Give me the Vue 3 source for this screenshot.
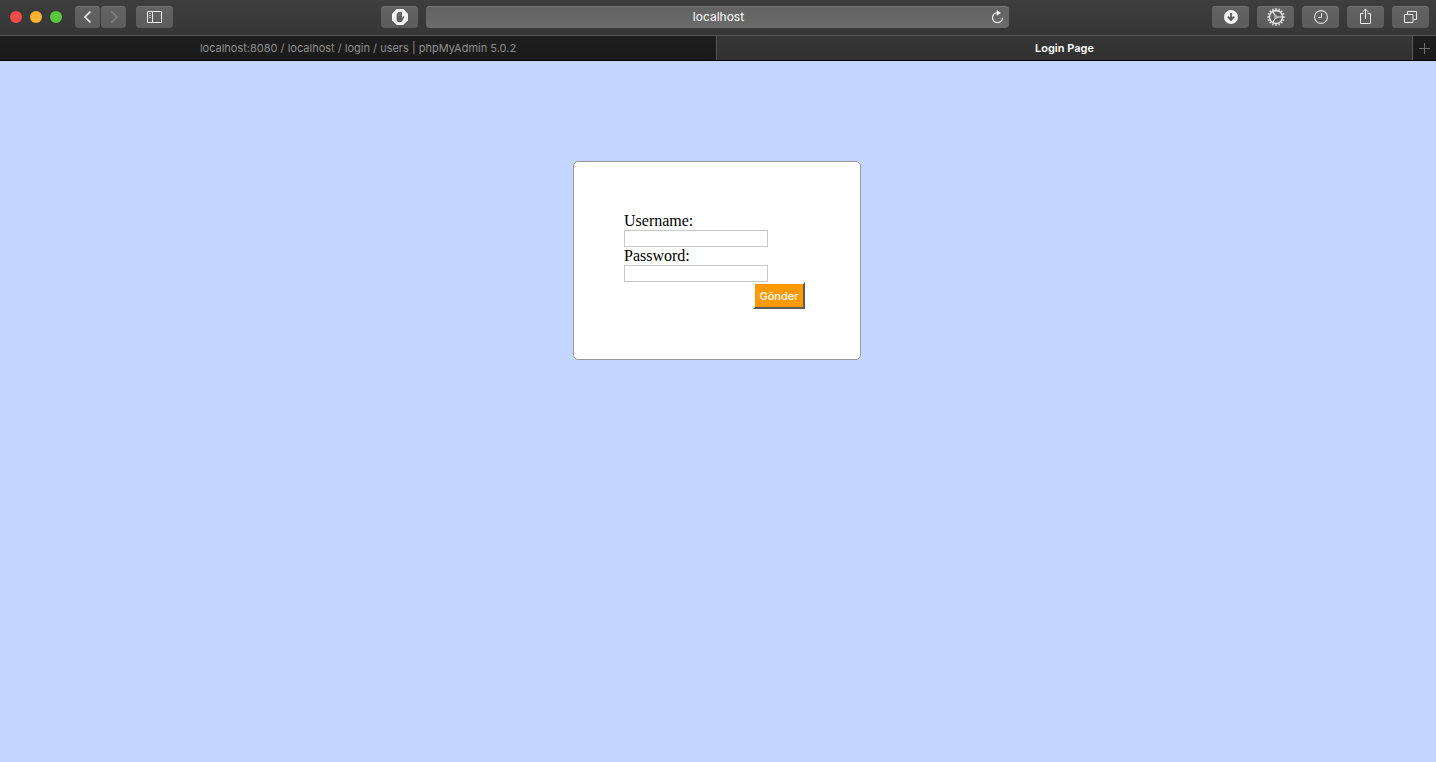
<script setup>
import { ref } from 'vue'

const address = ref('localhost')
const username = ref('')
const password = ref('')
const teeth = Array.from({ length: 16 }, (_, i) => i * 22.5)
</script>

<template>
  <div class="window">
    <header class="toolbar">
      <div class="side left">
        <div class="lights">
          <button class="light red" aria-label="Close"></button>
          <button class="light yellow" aria-label="Minimize"></button>
          <button class="light green" aria-label="Zoom"></button>
        </div>
        <div class="nav">
          <button class="tool narrow" aria-label="Back">
            <svg width="10" height="14" viewBox="0 0 10 14"><path d="M7.500 1.500 2 7l5.500 5.500" fill="none" stroke="#f0f0f0" stroke-width="1.700" /></svg>
          </button>
          <button class="tool narrow" aria-label="Forward">
            <svg width="10" height="14" viewBox="0 0 10 14"><path d="M2.500 1.500 8 7l-5.500 5.500" fill="none" stroke="#858585" stroke-width="1.500" /></svg>
          </button>
        </div>
        <button class="tool" aria-label="Sidebar">
          <svg width="15" height="12" viewBox="0 0 15 12" fill="none" stroke="#ececec">
            <path d="M.5.5h14v11H.5zM5.500.5v11" />
            <path d="M2 2.500h2M2 4.500h2M2 6.500h2" stroke="#bdbdbd" />
          </svg>
        </button>
        <button class="tool blocker" aria-label="Content blocker">
          <svg width="16" height="16" viewBox="0 0 16 16">
            <path d="M4.700 0h6.600L16 4.700v6.600L11.300 16H4.700L0 11.300V4.700z" fill="#f4f4f4" />
            <path d="M4.600 8.200V5q0-.8.600-.8t.6.800V3.800q0-.8.700-.8t.7.800V3.200q0-.8.700-.8t.7.800v.7q0-.8.700-.8t.7.800v5l1-1.500q.5-.7 1-.3.400.3.100.9l-1.600 3.500Q9.800 13.300 8 13.300q-3.400 0-3.400-3z" fill="#5e5e5e" />
            <path d="M5.800 4.300v3M7.200 3.500v3.500M8.600 3.500v3.500" stroke="#8a8a8a" stroke-width=".4" />
          </svg>
        </button>
      </div>

      <div class="address">
        <input v-model="address" type="text" aria-label="Address" />
        <button class="reload" aria-label="Reload">
          <svg width="13" height="14" viewBox="0 0 13 14">
            <path d="M6.500 2.700a5 5 0 1 0 5 5" fill="none" stroke="#ececec" stroke-width="1.200" />
            <path d="M5.700 0 10 3 5.700 5.700z" fill="#ececec" />
          </svg>
        </button>
      </div>

      <div class="side right">
        <button class="tool" aria-label="Downloads">
          <svg width="14" height="14" viewBox="0 0 14 14">
            <circle cx="7" cy="7" r="7" fill="#f2f2f2" />
            <path d="M7 3v6M3.900 6.700 7 10l3.100-3.300" fill="none" stroke="#555" stroke-width="1.800" />
          </svg>
        </button>
        <button class="tool" aria-label="Settings">
          <svg width="18" height="18" viewBox="0 0 18 18" fill="none" stroke="#f0f0f0">
            <circle cx="9" cy="9" r="6.500" stroke-width="1.300" />
            <path v-for="a in teeth" :key="a" d="M9 2.200V.1" stroke-width="1.300" :transform="`rotate(${a} 9 9)`" />
            <path d="M9 9h6.300M9 9 5.700 3.400M9 9l-3.300 5.600" stroke-width="1.100" />
            <circle cx="9" cy="9" r="1.200" fill="#5f5f5f" stroke-width=".8" />
          </svg>
        </button>
        <button class="tool" aria-label="History">
          <svg width="14" height="14" viewBox="0 0 14 14" fill="none" stroke="#dedede">
            <circle cx="7" cy="7" r="6.400" stroke-width="1.100" />
            <path d="M7.500 3v4.500H4" />
          </svg>
        </button>
        <button class="tool" aria-label="Share">
          <svg class="share" width="11" height="16" viewBox="0 0 11 16" fill="none" stroke="#ececec">
            <path d="M3.500 5.500h-3v10h10v-10h-3M5.500 11V1.200M2.700 3.900l2.800-2.800 2.800 2.800" />
          </svg>
        </button>
        <button class="tool" aria-label="Show all tabs">
          <svg width="13" height="12" viewBox="0 0 13 12" fill="none" stroke="#ececec">
            <path d="M.5 3.500h8.500v8H.5zM3.500 3V.5h9v8H9.500" />
          </svg>
        </button>
      </div>
    </header>

    <nav class="tabs">
      <button class="tab">localhost:8080 / localhost / login / users | phpMyAdmin 5.0.2</button>
      <button class="tab active">Login Page</button>
      <button class="tab add" aria-label="New tab">
        <svg width="11" height="11" viewBox="0 0 11 11"><path d="M5.500 0v11M0 5.500h11" stroke="#707070" /></svg>
      </button>
    </nav>

    <main>
      <form class="card" @submit.prevent>
        <label for="username">Username:</label>
        <input id="username" v-model="username" type="text" />
        <label for="password">Password:</label>
        <input id="password" v-model="password" type="password" />
        <button class="submit" type="submit">Gönder</button>
      </form>
    </main>
  </div>
</template>

<style>
body {
  background: #c2d6ff;
}
</style>

<style scoped>
.window {
  font-family: Inter, "Liberation Sans", sans-serif;
}
button,
input {
  box-sizing: border-box;
  margin: 0;
  padding: 0;
  border: 0;
  font-family: inherit;
}
svg {
  display: block;
}
.toolbar {
  display: grid;
  grid-template-columns: 426fr 583fr 427fr;
  padding: 6px 0 7px;
  background: linear-gradient(#3e3e3e, #363636);
  border-bottom: 1px solid #585858;
}
.side {
  display: flex;
  align-items: center;
}
.left {
  padding: 0 8px 0 10px;
}
.right {
  justify-content: flex-end;
  gap: 8px;
  padding-right: 7px;
}
.lights {
  display: flex;
  gap: 8px;
  margin-right: 13px;
}
.light {
  width: 12px;
  height: 12px;
  border-radius: 50%;
}
.red {
  background: #f04b47;
}
.yellow {
  background: #fab32e;
}
.green {
  background: #58c93c;
}
.nav {
  display: flex;
  gap: 1px;
  margin-right: 10px;
}
.tool {
  display: flex;
  align-items: center;
  justify-content: center;
  width: 37px;
  height: 22px;
  border-radius: 4px;
  background: linear-gradient(#636363, #5c5c5c);
  box-shadow: inset 0 1px #6e6e6e;
}
.narrow {
  width: 25px;
}
.blocker {
  margin-left: auto;
}
.address {
  display: flex;
  align-items: center;
  height: 22px;
  padding: 0 5px 0 20px;
  border-radius: 4px;
  background: linear-gradient(#636363, #6b6b6b);
  box-shadow: inset 0 1px #767676;
}
.address input {
  flex: 1;
  min-width: 0;
  background: none;
  color: #fff;
  font-size: 12px;
  line-height: 22px;
  text-align: center;
}
.reload {
  background: none;
}
.share {
  margin-bottom: 2px;
}
.tabs {
  display: grid;
  grid-template-columns: 716fr 696fr 24px;
  height: 24px;
  border-bottom: 1px solid #000;
}
.tab {
  background: linear-gradient(#1e1e1e, #1a1a1a);
  color: #8f8f8f;
  font-size: 11px;
  line-height: 24px;
}
.active {
  background: linear-gradient(#363636, #303030);
  border-left: 1px solid #5a5a5a;
  color: #fff;
  font-weight: 600;
}
.add {
  display: flex;
  align-items: center;
  justify-content: center;
  border-left: 1px solid #5a5a5a;
}
main {
  padding: 100px 2px 20px 0;
}
.card {
  box-sizing: border-box;
  display: flex;
  flex-direction: column;
  align-items: flex-start;
  width: 288px;
  margin: 0 auto;
  padding: 50px;
  border: 1px solid #999;
  border-radius: 5px;
  background: #fff;
}
.card label {
  color: #000;
  font-family: "Liberation Serif", serif;
  font-size: 16px;
  line-height: 18px;
}
.card input {
  width: 144px;
  height: 17px;
  padding: 0 2px;
  border: 1px solid #c8c8c8;
  background: #fff;
  font-size: 11px;
}
.submit {
  align-self: flex-end;
  min-width: 52px;
  height: 27px;
  margin-right: 5px;
  padding: 0 4px;
  border: 2px solid;
  border-color: #fff #5c5c5c #5c5c5c #fff;
  background: #ff9900;
  background-clip: padding-box;
  color: #fff;
  font-size: 11px;
  font-weight: 500;
}
</style>
